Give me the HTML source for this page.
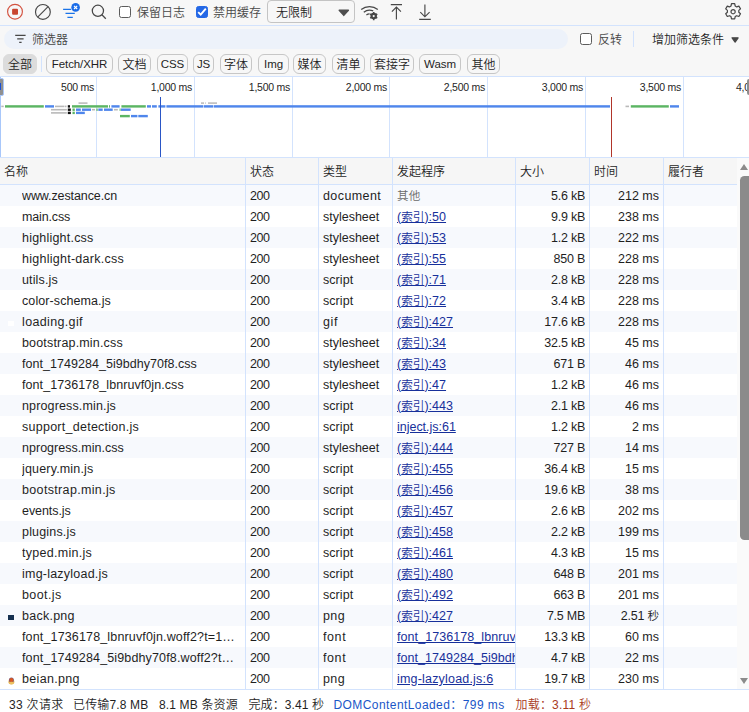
<!DOCTYPE html>
<html lang="zh-CN">
<head>
<meta charset="utf-8">
<title>Network</title>
<style>
*{box-sizing:border-box;margin:0;padding:0}
html,body{width:749px;height:712px;overflow:hidden;background:#fff}
body{position:relative;font-family:"Liberation Sans","Noto Sans CJK SC",sans-serif;font-size:12px;color:#1f1f1f;line-height:1;font-weight:350}
.abs{position:absolute}
#toolbar{position:absolute;left:0;top:0;width:749px;height:26px;background:#f7f7f7;border-bottom:1px solid #d3e3fd}
#filterbar{position:absolute;left:0;top:26px;width:749px;height:50px;background:#f7f7f7}
#pill{position:absolute;left:4px;top:3px;width:564px;height:20px;border-radius:10px;background:#edf2fa}
#pill span{position:absolute;left:28px;top:5px;font-size:12px;color:#474747}
.chip{position:absolute;top:54px;height:20px;padding-top:1px;border:1px solid #c7c7c7;border-radius:6px;font-size:12px;line-height:18px;text-align:center;color:#1f1f1f;background:transparent}
.chip.sel{background:#dcdcdc;border-color:#dcdcdc}
#overview{position:absolute;left:0;top:76px;width:749px;height:82px;border-top:1px solid #d3e3fd;border-bottom:1px solid #d3e3fd;background:#fff}
.gl{position:absolute;top:0;width:1px;height:80px;background:#d3e3fd}
.lab{position:absolute;top:5px;font-size:10.5px;letter-spacing:-0.25px;color:#1f1f1f;text-align:right;width:80px;white-space:nowrap}
#thead{position:absolute;left:0;top:158px;width:737px;height:27px;background:#f6f6f6;border-bottom:1px solid #d3e3fd}
#thead span{position:absolute;top:8px;font-size:12px;color:#1f1f1f}
.row{position:absolute;left:0;width:737px;height:21px;background:#fff;white-space:nowrap}
.row.odd{background:#f7f9fd}
.c{position:absolute;top:0;height:21px;line-height:22.5px;overflow:hidden;font-size:12.5px}
.c1{left:22px;width:223px}
.c2{left:250px;width:66px;letter-spacing:-0.4px}
.c3{left:323px;width:68px}
.c4{left:397px;width:118px}
.c5{left:520px;width:65px;text-align:right}
.c6{left:594px;width:65px;text-align:right}
.lnk{text-decoration:underline;color:#17309b}
.zh{font-size:11.6px}
.oth{color:#6a6a6a}
.ico{position:absolute;left:8px;top:10px;width:6px;height:5px}
.ico2{position:absolute;left:8px;top:8.8px}
.vl{position:absolute;top:158px;width:1px;height:531px;background:#d3e3fd}
#status{position:absolute;left:0;top:689px;width:749px;height:23px;border-top:1px solid #d3e3fd;background:#fff;font-size:12px;line-height:24px;white-space:nowrap}
#status span{position:absolute;top:2.5px}
#sb{position:absolute;left:737px;top:158px;width:12px;height:531px;background:#fafafa;overflow:hidden}

.cb{position:absolute;width:12px;height:12px;border:1px solid #5c5c5c;border-radius:2.5px;background:#fff}
.cb.on{background:#2468e6;border-color:#2468e6}
.tl{position:absolute;top:7px;font-size:12px;color:#474747;white-space:nowrap}
#sel{position:absolute;left:267px;top:0;width:88px;height:23px;border:1px solid #c4c4c4;border-radius:4px;background:transparent}
#sel span{position:absolute;left:8px;top:6px;font-size:12px;color:#1f1f1f}
#sel svg{position:absolute;left:69px;top:7px}
#bars{position:absolute;left:0;top:0}
.chip b{font-weight:inherit;font-size:11.5px;letter-spacing:-0.1px;position:relative;top:-1px}
</style>
</head>
<body>
<div id="toolbar">
<svg class="abs" style="left:0;top:0" width="749" height="25" viewBox="0 0 749 25" fill="none">
<circle cx="15" cy="11.7" r="7.4" stroke="#d3523f" stroke-width="1.15"/>
<rect x="12.1" y="8.7" width="5.9" height="6" rx="1" fill="#c8452f"/>
<circle cx="42.9" cy="11.9" r="7.4" stroke="#474747" stroke-width="1.15"/>
<path d="M37.7 17.1L48.1 6.7" stroke="#474747" stroke-width="1.15"/>
<path d="M63.1 9.3H77M65.5 13.4H74.8M67.4 17.3H72.8" stroke="#1a73e8" stroke-width="1.15"/>
<circle cx="75.6" cy="7.4" r="4.9" fill="#f7f7f7"/>
<circle cx="75.6" cy="7.4" r="4.3" fill="#1a6ce8"/>
<path d="M74 5.8L77.2 9M77.2 5.8L74 9" stroke="#fff" stroke-width="1.1"/>
<circle cx="97.9" cy="10.8" r="5.6" stroke="#474747" stroke-width="1.25"/>
<path d="M101.9 14.8L105.8 18.7" stroke="#474747" stroke-width="1.25"/>
<!-- wifi gear -->
<path d="M361.2 9.6A13 13 0 0 1 377.8 9.6" stroke="#474747" stroke-width="1.25"/>
<path d="M363.8 12.2A9 9 0 0 1 373.2 10.9" stroke="#474747" stroke-width="1.25"/>
<path d="M366.4 14.9A5.2 5.2 0 0 1 369.6 13.8" stroke="#474747" stroke-width="1.25"/>
<circle cx="373.7" cy="16.1" r="2.3" stroke="#474747" stroke-width="1.9"/>
<path d="M373.7 12V20.2M370.15 14.05L377.25 18.15M370.15 18.15L377.25 14.05" stroke="#474747" stroke-width="1.6"/>
<circle cx="373.7" cy="16.1" r="1.1" fill="#f7f7f7"/>
<!-- upload -->
<path d="M390.8 4.6H402M396.4 19.4V6.8M391.9 11.6L396.4 7L400.9 11.6" stroke="#474747" stroke-width="1.15"/>
<!-- download -->
<path d="M419.2 19.4H430.8M424.9 4.5V16.4M420.3 12.2L424.9 16.8L429.6 12.2" stroke="#474747" stroke-width="1.15"/>
<!-- gear -->
<g transform="translate(733.1 11.7)" stroke="#474747" stroke-width="1.2" stroke-linejoin="round">
<path d="M-1.6 -8h3.2l0.5 2.3 1.5 0.9 2.2-0.8 1.6 2.8-1.7 1.5v1.8l1.7 1.5-1.6 2.8-2.2-0.8-1.5 0.9-0.5 2.3h-3.2l-0.5-2.3-1.5-0.9-2.2 0.8-1.6-2.8 1.7-1.5v-1.8l-1.7-1.5 1.6-2.8 2.2 0.8 1.5-0.9z"/>
<circle cx="0" cy="0" r="2.1"/>
</g>
</svg>
<i class="cb" style="left:119px;top:6px"></i><span class="tl" style="left:137px">保留日志</span>
<i class="cb on" style="left:196px;top:6px"><svg width="12" height="12" viewBox="0 0 12 12" style="position:absolute;left:-1px;top:-1px"><path d="M2.2 6.2L4.7 8.7L9.8 2.7" stroke="#fff" stroke-width="1.9" fill="none"/></svg></i><span class="tl" style="left:213px">禁用缓存</span>
<div id="sel"><span>无限制</span><svg width="14" height="10" viewBox="0 0 14 10"><path d="M2.2 2.2H11.4L6.8 7.4z" fill="#4e4e4e" stroke="#4e4e4e" stroke-width="1.4" stroke-linejoin="round"/></svg></div>
</div>
<div id="filterbar"><div id="pill"><svg class="abs" style="left:10px;top:5px" width="14" height="10" viewBox="0 0 14 10"><path d="M1.2 1.4H11.6M3.2 4.9H9.6M5.2 8.3H7.6" stroke="#474747" stroke-width="1.3" fill="none"/></svg><span>筛选器</span></div>
<i class="cb" style="left:580px;top:7px"></i><span class="tl" style="left:598px;top:8px">反转</span>
<i class="abs" style="left:633px;top:5px;width:1px;height:16px;background:#d3e3fd"></i>
<span class="tl" style="left:652px;top:8px;color:#1f1f1f">增加筛选条件</span>
<svg class="abs" style="left:730px;top:10px" width="10" height="8" viewBox="0 0 10 8"><path d="M2.1 1.8H8.1L5.1 6z" fill="#474747" stroke="#474747" stroke-width="1.3" stroke-linejoin="round"/></svg>
</div>
<i class="abs" style="left:41px;top:56px;width:1px;height:16px;background:#d3e3fd"></i>
<div class="chip sel" style="left:3px;width:34px">全部</div>
<div class="chip" style="left:46px;width:67px"><b>Fetch/XHR</b></div>
<div class="chip" style="left:118px;width:33px">文档</div>
<div class="chip" style="left:157px;width:31px"><b>CSS</b></div>
<div class="chip" style="left:193px;width:21px"><b>JS</b></div>
<div class="chip" style="left:220px;width:32px">字体</div>
<div class="chip" style="left:258px;width:31px"><b>Img</b></div>
<div class="chip" style="left:293px;width:33px">媒体</div>
<div class="chip" style="left:332px;width:33px">清单</div>
<div class="chip" style="left:370px;width:44px">套接字</div>
<div class="chip" style="left:419px;width:42px"><b>Wasm</b></div>
<div class="chip" style="left:467px;width:33px">其他</div>
<div id="overview">
<div class="gl" style="left:96px"></div>
<div class="gl" style="left:194px"></div>
<div class="gl" style="left:292px"></div>
<div class="gl" style="left:389px"></div>
<div class="gl" style="left:487px"></div>
<div class="gl" style="left:585px"></div>
<div class="gl" style="left:683px"></div>
<svg id="bars" width="749" height="80" viewBox="0 0 749 80"><rect x="78.5" y="25.35" width="9.0" height="1.5" fill="#b9b9b9"/><rect x="1.3" y="28.6" width="2.4" height="1.6" fill="#b9b9b9"/><rect x="5" y="28.2" width="38.8" height="2.4" fill="#5bb563"/><rect x="45" y="28.2" width="9" height="2.4" fill="#4f86ec"/><rect x="55" y="28.6" width="9" height="1.6" fill="#b9b9b9"/><rect x="64.5" y="28.6" width="2.0" height="1.6" fill="#b9b9b9"/><rect x="67.8" y="28.2" width="2.2" height="2.4" fill="#111"/><rect x="72" y="28.2" width="36" height="2.4" fill="#5bb563"/><rect x="109" y="28.2" width="1" height="2.4" fill="#5bb563"/><rect x="111.4" y="28.2" width="8.2" height="2.4" fill="#4f86ec"/><rect x="121.4" y="28.2" width="24.4" height="2.4" fill="#5bb563"/><rect x="147" y="28.2" width="4" height="2.4" fill="#4f86ec"/><rect x="152" y="28.2" width="4.8" height="2.4" fill="#4f86ec"/><rect x="158.4" y="28.2" width="7.0" height="2.4" fill="#4f86ec"/><rect x="166.4" y="28.2" width="37.0" height="2.4" fill="#4f86ec"/><rect x="204" y="28.2" width="9.4" height="2.4" fill="#4f86ec"/><rect x="214" y="28.2" width="396" height="2.4" fill="#4f86ec"/><rect x="625.5" y="28.6" width="3.5" height="1.6" fill="#b9b9b9"/><rect x="630.8" y="28.2" width="38.0" height="2.4" fill="#5bb563"/><rect x="670" y="28.2" width="9" height="2.4" fill="#4f86ec"/><rect x="51" y="31.9" width="15.8" height="1.6" fill="#b9b9b9"/><rect x="67.8" y="31.5" width="3.0" height="2.4" fill="#111"/><rect x="72.5" y="31.5" width="2.3" height="2.4" fill="#5bb563"/><rect x="76" y="31.5" width="4.8" height="2.4" fill="#4f86ec"/><rect x="82" y="31.5" width="9" height="2.4" fill="#4f86ec"/><rect x="92" y="31.9" width="3" height="1.6" fill="#b9b9b9"/><rect x="96.4" y="31.5" width="1.3" height="2.4" fill="#5bb563"/><rect x="98.3" y="31.5" width="4.4" height="2.4" fill="#4f86ec"/><rect x="104" y="31.5" width="8.7" height="2.4" fill="#4f86ec"/><rect x="114" y="31.9" width="3.8" height="1.6" fill="#b9b9b9"/><rect x="119.6" y="31.5" width="1.0" height="2.4" fill="#5bb563"/><rect x="121" y="31.5" width="9.7" height="2.4" fill="#4f86ec"/><rect x="51" y="35.1" width="15.8" height="1.6" fill="#b9b9b9"/><rect x="67.8" y="34.7" width="3.0" height="2.4" fill="#111"/><rect x="72.5" y="34.7" width="2.3" height="2.4" fill="#5bb563"/><rect x="76" y="34.7" width="8.8" height="2.4" fill="#4f86ec"/><rect x="120" y="37.9" width="9.8" height="2.4" fill="#5bb563"/><rect x="131" y="37.9" width="6.4" height="2.4" fill="#4f86ec"/><rect x="138.3" y="37.9" width="9.5" height="2.4" fill="#4f86ec"/><rect x="201" y="25.35" width="3" height="1.5" fill="#b9b9b9"/><rect x="205.3" y="25.35" width="0.7" height="1.5" fill="#b9b9b9"/><rect x="208" y="25.35" width="9" height="1.5" fill="#b9b9b9"/></svg>
<div class="lab" style="left:14px">500 ms</div>
<div class="lab" style="left:112px">1,000 ms</div>
<div class="lab" style="left:210px">1,500 ms</div>
<div class="lab" style="left:307px">2,000 ms</div>
<div class="lab" style="left:405px">2,500 ms</div>
<div class="lab" style="left:503px">3,000 ms</div>
<div class="lab" style="left:601px">3,500 ms</div>
<i class="abs" style="left:160px;top:20px;width:1.3px;height:60px;background:#2a56c6"></i><i class="abs" style="left:611px;top:20px;width:1.3px;height:60px;background:#b0352a"></i>
<div class="lab" style="left:736px;text-align:left">4,000 ms</div>
<i class="abs" style="left:0;top:0;width:1px;height:80px;background:#a8c7fa"></i><i class="abs" style="left:-1px;top:1px;width:4.5px;height:17.5px;background:#909090;border-radius:0 2px 2px 0;border:0.6px solid #a8c7fa"></i><i class="abs" style="left:0;top:6px;width:1px;height:7px;background:#1a50d6"></i><i class="abs" style="left:746.5px;top:2px;width:3px;height:16px;background:#8e8e8e;border-radius:2px 0 0 2px"></i>
</div>
<div id="thead">
<span style="left:4px">名称</span><span style="left:250px">状态</span><span style="left:323px">类型</span><span style="left:397px">发起程序</span><span style="left:520px">大小</span><span style="left:594px">时间</span><span style="left:668px">履行者</span>
</div>
<div class="row odd" style="top:185px"><span class="c c1" style="letter-spacing:-0.10px">www.zestance.cn</span><span class="c c2">200</span><span class="c c3" style="letter-spacing:0.41px">document</span><span class="c c4" style="letter-spacing:0.1px"><span class="oth"><span class="zh">其他</span></span></span><span class="c c5" style="letter-spacing:-0.25px">5.6 kB</span><span class="c c6" style="letter-spacing:0px">212 ms</span></div>
<div class="row" style="top:206px"><span class="c c1" style="letter-spacing:-0.14px">main.css</span><span class="c c2">200</span><span class="c c3" style="letter-spacing:-0.01px">stylesheet</span><span class="c c4" style="letter-spacing:0.02px"><span class="lnk">(<span class="zh">索引</span>):50</span></span><span class="c c5" style="letter-spacing:-0.25px">9.9 kB</span><span class="c c6" style="letter-spacing:0px">238 ms</span></div>
<div class="row odd" style="top:227px"><span class="c c1" style="letter-spacing:0.21px">highlight.css</span><span class="c c2">200</span><span class="c c3" style="letter-spacing:-0.01px">stylesheet</span><span class="c c4" style="letter-spacing:0.02px"><span class="lnk">(<span class="zh">索引</span>):53</span></span><span class="c c5" style="letter-spacing:-0.25px">1.2 kB</span><span class="c c6" style="letter-spacing:0px">222 ms</span></div>
<div class="row" style="top:248px"><span class="c c1" style="letter-spacing:0.26px">highlight-dark.css</span><span class="c c2">200</span><span class="c c3" style="letter-spacing:-0.01px">stylesheet</span><span class="c c4" style="letter-spacing:0.02px"><span class="lnk">(<span class="zh">索引</span>):55</span></span><span class="c c5" style="letter-spacing:-0.25px">850 B</span><span class="c c6" style="letter-spacing:0px">228 ms</span></div>
<div class="row odd" style="top:269px"><span class="c c1" style="letter-spacing:0.13px">utils.js</span><span class="c c2">200</span><span class="c c3" style="letter-spacing:0.06px">script</span><span class="c c4" style="letter-spacing:0.02px"><span class="lnk">(<span class="zh">索引</span>):71</span></span><span class="c c5" style="letter-spacing:-0.25px">2.8 kB</span><span class="c c6" style="letter-spacing:0px">228 ms</span></div>
<div class="row" style="top:290px"><span class="c c1" style="letter-spacing:0.09px">color-schema.js</span><span class="c c2">200</span><span class="c c3" style="letter-spacing:0.06px">script</span><span class="c c4" style="letter-spacing:0.02px"><span class="lnk">(<span class="zh">索引</span>):72</span></span><span class="c c5" style="letter-spacing:-0.25px">3.4 kB</span><span class="c c6" style="letter-spacing:0px">228 ms</span></div>
<div class="row odd" style="top:311px"><i class="ico" style="background:#fff"></i><span class="c c1" style="letter-spacing:0.35px">loading.gif</span><span class="c c2">200</span><span class="c c3" style="letter-spacing:0.60px">gif</span><span class="c c4" style="letter-spacing:0.02px"><span class="lnk">(<span class="zh">索引</span>):427</span></span><span class="c c5" style="letter-spacing:-0.25px">17.6 kB</span><span class="c c6" style="letter-spacing:0px">228 ms</span></div>
<div class="row" style="top:332px"><span class="c c1" style="letter-spacing:0.17px">bootstrap.min.css</span><span class="c c2">200</span><span class="c c3" style="letter-spacing:-0.01px">stylesheet</span><span class="c c4" style="letter-spacing:0.02px"><span class="lnk">(<span class="zh">索引</span>):34</span></span><span class="c c5" style="letter-spacing:-0.25px">32.5 kB</span><span class="c c6" style="letter-spacing:0px">45 ms</span></div>
<div class="row odd" style="top:353px"><span class="c c1" style="letter-spacing:0.04px">font_1749284_5i9bdhy70f8.css</span><span class="c c2">200</span><span class="c c3" style="letter-spacing:-0.01px">stylesheet</span><span class="c c4" style="letter-spacing:0.02px"><span class="lnk">(<span class="zh">索引</span>):43</span></span><span class="c c5" style="letter-spacing:-0.25px">671 B</span><span class="c c6" style="letter-spacing:0px">46 ms</span></div>
<div class="row" style="top:374px"><span class="c c1" style="letter-spacing:0.07px">font_1736178_lbnruvf0jn.css</span><span class="c c2">200</span><span class="c c3" style="letter-spacing:-0.01px">stylesheet</span><span class="c c4" style="letter-spacing:0.02px"><span class="lnk">(<span class="zh">索引</span>):47</span></span><span class="c c5" style="letter-spacing:-0.25px">1.2 kB</span><span class="c c6" style="letter-spacing:0px">46 ms</span></div>
<div class="row odd" style="top:395px"><span class="c c1" style="letter-spacing:0.14px">nprogress.min.js</span><span class="c c2">200</span><span class="c c3" style="letter-spacing:0.06px">script</span><span class="c c4" style="letter-spacing:0.02px"><span class="lnk">(<span class="zh">索引</span>):443</span></span><span class="c c5" style="letter-spacing:-0.25px">2.1 kB</span><span class="c c6" style="letter-spacing:0px">46 ms</span></div>
<div class="row" style="top:416px"><span class="c c1" style="letter-spacing:0.26px">support_detection.js</span><span class="c c2">200</span><span class="c c3" style="letter-spacing:0.06px">script</span><span class="c c4" style="letter-spacing:-0.02px"><span class="lnk">inject.js:61</span></span><span class="c c5" style="letter-spacing:-0.25px">1.2 kB</span><span class="c c6" style="letter-spacing:0px">2 ms</span></div>
<div class="row odd" style="top:437px"><span class="c c1" style="letter-spacing:0.02px">nprogress.min.css</span><span class="c c2">200</span><span class="c c3" style="letter-spacing:-0.01px">stylesheet</span><span class="c c4" style="letter-spacing:0.02px"><span class="lnk">(<span class="zh">索引</span>):444</span></span><span class="c c5" style="letter-spacing:-0.25px">727 B</span><span class="c c6" style="letter-spacing:0px">14 ms</span></div>
<div class="row" style="top:458px"><span class="c c1" style="letter-spacing:0.17px">jquery.min.js</span><span class="c c2">200</span><span class="c c3" style="letter-spacing:0.06px">script</span><span class="c c4" style="letter-spacing:0.02px"><span class="lnk">(<span class="zh">索引</span>):455</span></span><span class="c c5" style="letter-spacing:-0.25px">36.4 kB</span><span class="c c6" style="letter-spacing:0px">15 ms</span></div>
<div class="row odd" style="top:479px"><span class="c c1" style="letter-spacing:0.34px">bootstrap.min.js</span><span class="c c2">200</span><span class="c c3" style="letter-spacing:0.06px">script</span><span class="c c4" style="letter-spacing:0.02px"><span class="lnk">(<span class="zh">索引</span>):456</span></span><span class="c c5" style="letter-spacing:-0.25px">19.6 kB</span><span class="c c6" style="letter-spacing:0px">38 ms</span></div>
<div class="row" style="top:500px"><span class="c c1" style="letter-spacing:-0.07px">events.js</span><span class="c c2">200</span><span class="c c3" style="letter-spacing:0.06px">script</span><span class="c c4" style="letter-spacing:0.02px"><span class="lnk">(<span class="zh">索引</span>):457</span></span><span class="c c5" style="letter-spacing:-0.25px">2.6 kB</span><span class="c c6" style="letter-spacing:0px">202 ms</span></div>
<div class="row odd" style="top:521px"><span class="c c1" style="letter-spacing:0.18px">plugins.js</span><span class="c c2">200</span><span class="c c3" style="letter-spacing:0.06px">script</span><span class="c c4" style="letter-spacing:0.02px"><span class="lnk">(<span class="zh">索引</span>):458</span></span><span class="c c5" style="letter-spacing:-0.25px">2.2 kB</span><span class="c c6" style="letter-spacing:0px">199 ms</span></div>
<div class="row" style="top:542px"><span class="c c1" style="letter-spacing:0.28px">typed.min.js</span><span class="c c2">200</span><span class="c c3" style="letter-spacing:0.06px">script</span><span class="c c4" style="letter-spacing:0.02px"><span class="lnk">(<span class="zh">索引</span>):461</span></span><span class="c c5" style="letter-spacing:-0.25px">4.3 kB</span><span class="c c6" style="letter-spacing:0px">15 ms</span></div>
<div class="row odd" style="top:563px"><span class="c c1" style="letter-spacing:0.22px">img-lazyload.js</span><span class="c c2">200</span><span class="c c3" style="letter-spacing:0.06px">script</span><span class="c c4" style="letter-spacing:0.02px"><span class="lnk">(<span class="zh">索引</span>):480</span></span><span class="c c5" style="letter-spacing:-0.25px">648 B</span><span class="c c6" style="letter-spacing:0px">201 ms</span></div>
<div class="row" style="top:584px"><span class="c c1" style="letter-spacing:0.40px">boot.js</span><span class="c c2">200</span><span class="c c3" style="letter-spacing:0.06px">script</span><span class="c c4" style="letter-spacing:0.02px"><span class="lnk">(<span class="zh">索引</span>):492</span></span><span class="c c5" style="letter-spacing:-0.25px">663 B</span><span class="c c6" style="letter-spacing:0px">201 ms</span></div>
<div class="row odd" style="top:605px"><i class="ico" style="background:#15304f"></i><span class="c c1" style="letter-spacing:0.25px">back.png</span><span class="c c2">200</span><span class="c c3" style="letter-spacing:0.40px">png</span><span class="c c4" style="letter-spacing:0.02px"><span class="lnk">(<span class="zh">索引</span>):427</span></span><span class="c c5" style="letter-spacing:-0.25px">7.5 MB</span><span class="c c6" style="letter-spacing:-0.2px">2.51 <span class="zh">秒</span></span></div>
<div class="row" style="top:626px"><span class="c c1" style="letter-spacing:0.15px">font_1736178_lbnruvf0jn.woff2?t=1…</span><span class="c c2">200</span><span class="c c3" style="letter-spacing:0.60px">font</span><span class="c c4" style="letter-spacing:0.07px"><span class="lnk">font_1736178_lbnruvf0jn.css</span></span><span class="c c5" style="letter-spacing:-0.25px">13.3 kB</span><span class="c c6" style="letter-spacing:0px">60 ms</span></div>
<div class="row odd" style="top:647px"><span class="c c1" style="letter-spacing:0.14px">font_1749284_5i9bdhy70f8.woff2?t…</span><span class="c c2">200</span><span class="c c3" style="letter-spacing:0.60px">font</span><span class="c c4" style="letter-spacing:0.04px"><span class="lnk">font_1749284_5i9bdhy70f8.css</span></span><span class="c c5" style="letter-spacing:-0.25px">4.7 kB</span><span class="c c6" style="letter-spacing:0px">22 ms</span></div>
<div class="row" style="top:668px"><svg class="ico2" width="7" height="8" viewBox="0 0 7 8"><ellipse cx="3.4" cy="5" rx="3" ry="2.4" fill="#e6b552"/><circle cx="3.4" cy="3" r="2.5" fill="#7a5f80"/><circle cx="3.4" cy="2.9" r="2" fill="#d9561f"/><ellipse cx="3.4" cy="6" rx="2.4" ry="1.2" fill="#ecc060"/></svg><span class="c c1" style="letter-spacing:0.32px">beian.png</span><span class="c c2">200</span><span class="c c3" style="letter-spacing:0.40px">png</span><span class="c c4" style="letter-spacing:0.19px"><span class="lnk">img-lazyload.js:6</span></span><span class="c c5" style="letter-spacing:-0.25px">19.7 kB</span><span class="c c6" style="letter-spacing:0px">230 ms</span></div>
<div class="vl" style="left:245px"></div>
<div class="vl" style="left:318px"></div>
<div class="vl" style="left:392px"></div>
<div class="vl" style="left:515px"></div>
<div class="vl" style="left:589px"></div>
<div class="vl" style="left:663px"></div>
<div id="sb"><i class="abs" style="left:3.3px;top:6px;width:0;height:0;border-left:4.5px solid transparent;border-right:4.5px solid transparent;border-bottom:6px solid #8b8b8b"></i><i class="abs" style="left:3.4px;top:17.6px;width:14px;height:364.5px;border-radius:4.5px;background:#8b8b8b"></i><i class="abs" style="left:3.3px;top:519.5px;width:0;height:0;border-left:4.5px solid transparent;border-right:4.5px solid transparent;border-top:6px solid #8b8b8b"></i></div>
<div id="status">
<span style="left:9px;letter-spacing:0.3px">33 次请求</span><span style="left:73px;letter-spacing:0.15px">已传输7.8 MB</span><span style="left:159px;letter-spacing:0.15px">8.1 MB 条资源</span><span style="left:248.5px;letter-spacing:0.1px">完成：3.41 秒</span><span style="left:333.5px;color:#1a56c8;letter-spacing:0.42px">DOMContentLoaded：799 ms</span><span style="left:515.5px;color:#a83a1c;letter-spacing:0.2px">加载：3.11 秒</span>
</div>
</body>
</html>
